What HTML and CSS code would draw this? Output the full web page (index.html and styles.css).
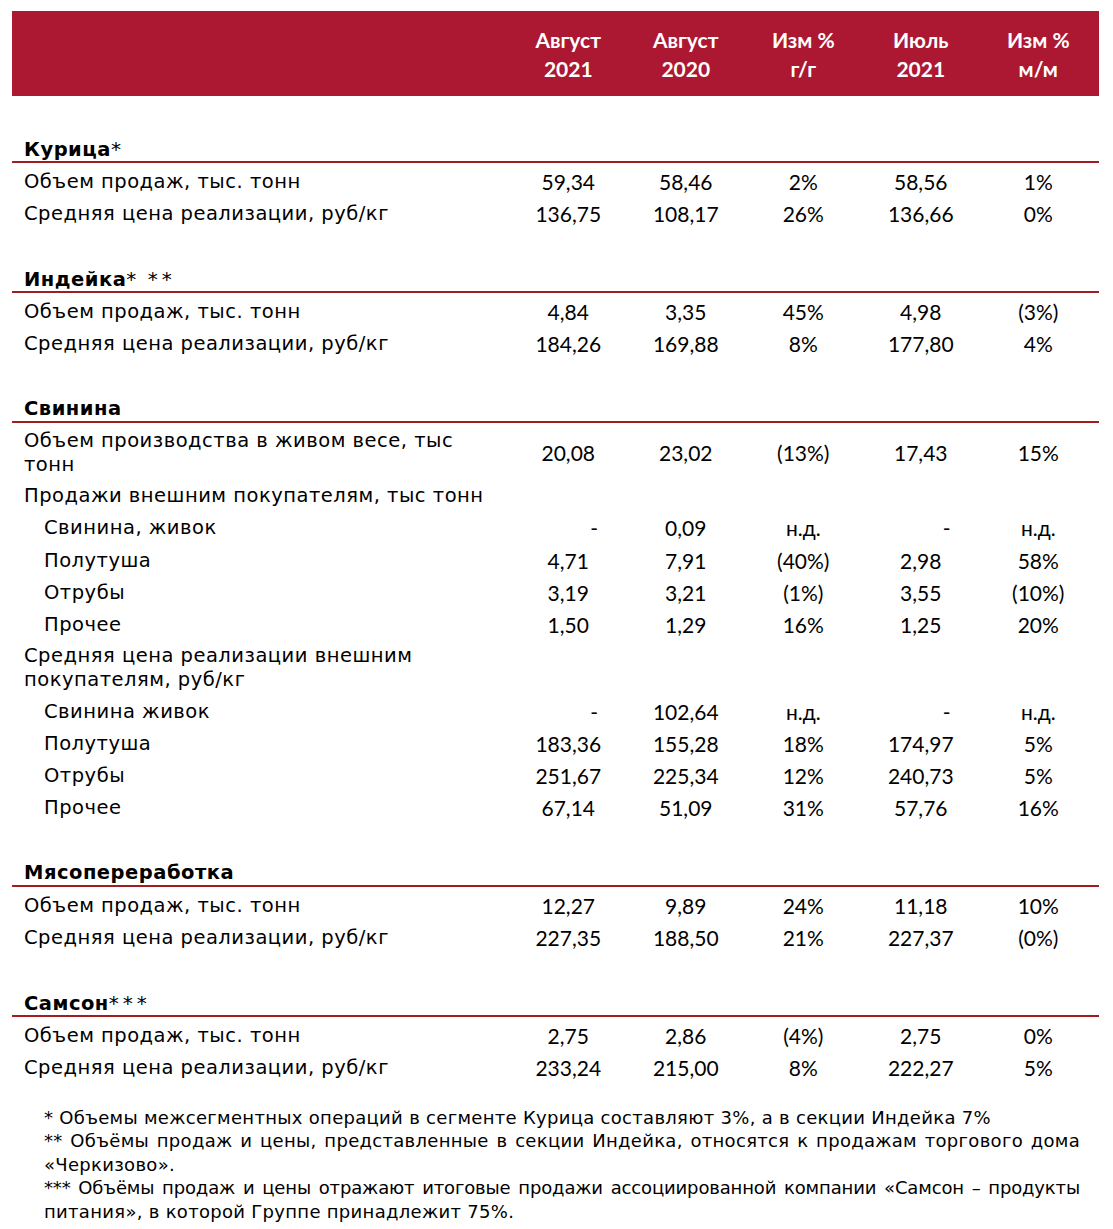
FILE: index.html
```html
<!DOCTYPE html>
<html lang="ru">
<head>
<meta charset="utf-8">
<link rel="stylesheet" href="styles.css">
</head>
<body>
<div class="page">
  <div class="head">
    <div></div>
    <div class="hc">Август<br>2021</div>
    <div class="hc">Август<br>2020</div>
    <div class="hc">Изм %<br>г/г</div>
    <div class="hc">Июль<br>2021</div>
    <div class="hc">Изм %<br>м/м</div>
  </div>

  <div class="sec first">
    <div class="title">Курица<span class="ast">*</span></div>
    <div class="rows">
      <div class="row"><div class="lbl">Объем продаж, тыс. тонн</div><div class="num">59,34</div><div class="num">58,46</div><div class="num">2%</div><div class="num">58,56</div><div class="num">1%</div></div>
      <div class="row"><div class="lbl">Средняя цена реализации, руб/кг</div><div class="num">136,75</div><div class="num">108,17</div><div class="num">26%</div><div class="num">136,66</div><div class="num">0%</div></div>
    </div>
  </div>

  <div class="sec">
    <div class="title">Индейка<span class="ast">*</span> <span class="ast">**</span></div>
    <div class="rows">
      <div class="row"><div class="lbl">Объем продаж, тыс. тонн</div><div class="num">4,84</div><div class="num">3,35</div><div class="num">45%</div><div class="num">4,98</div><div class="num">(3%)</div></div>
      <div class="row"><div class="lbl">Средняя цена реализации, руб/кг</div><div class="num">184,26</div><div class="num">169,88</div><div class="num">8%</div><div class="num">177,80</div><div class="num">4%</div></div>
    </div>
  </div>

  <div class="sec">
    <div class="title">Свинина</div>
    <div class="rows">
      <div class="row"><div class="lbl">Объем производства в живом весе, тыс тонн</div><div class="num">20,08</div><div class="num">23,02</div><div class="num">(13%)</div><div class="num">17,43</div><div class="num">15%</div></div>
      <div class="row"><div class="lbl wide">Продажи внешним покупателям, тыс тонн</div></div>
      <div class="row"><div class="lbl ind">Свинина, живок</div><div class="num dash">-</div><div class="num">0,09</div><div class="num">н.д.</div><div class="num dash">-</div><div class="num">н.д.</div></div>
      <div class="row"><div class="lbl ind">Полутуша</div><div class="num">4,71</div><div class="num">7,91</div><div class="num">(40%)</div><div class="num">2,98</div><div class="num">58%</div></div>
      <div class="row"><div class="lbl ind">Отрубы</div><div class="num">3,19</div><div class="num">3,21</div><div class="num">(1%)</div><div class="num">3,55</div><div class="num">(10%)</div></div>
      <div class="row"><div class="lbl ind">Прочее</div><div class="num">1,50</div><div class="num">1,29</div><div class="num">16%</div><div class="num">1,25</div><div class="num">20%</div></div>
      <div class="row"><div class="lbl">Средняя цена реализации внешним покупателям, руб/кг</div></div>
      <div class="row"><div class="lbl ind">Свинина живок</div><div class="num dash">-</div><div class="num">102,64</div><div class="num">н.д.</div><div class="num dash">-</div><div class="num">н.д.</div></div>
      <div class="row"><div class="lbl ind">Полутуша</div><div class="num">183,36</div><div class="num">155,28</div><div class="num">18%</div><div class="num">174,97</div><div class="num">5%</div></div>
      <div class="row"><div class="lbl ind">Отрубы</div><div class="num">251,67</div><div class="num">225,34</div><div class="num">12%</div><div class="num">240,73</div><div class="num">5%</div></div>
      <div class="row"><div class="lbl ind">Прочее</div><div class="num">67,14</div><div class="num">51,09</div><div class="num">31%</div><div class="num">57,76</div><div class="num">16%</div></div>
    </div>
  </div>

  <div class="sec">
    <div class="title">Мясопереработка</div>
    <div class="rows">
      <div class="row"><div class="lbl">Объем продаж, тыс. тонн</div><div class="num">12,27</div><div class="num">9,89</div><div class="num">24%</div><div class="num">11,18</div><div class="num">10%</div></div>
      <div class="row"><div class="lbl">Средняя цена реализации, руб/кг</div><div class="num">227,35</div><div class="num">188,50</div><div class="num">21%</div><div class="num">227,37</div><div class="num">(0%)</div></div>
    </div>
  </div>

  <div class="sec">
    <div class="title">Самсон<span class="ast">***</span></div>
    <div class="rows">
      <div class="row"><div class="lbl">Объем продаж, тыс. тонн</div><div class="num">2,75</div><div class="num">2,86</div><div class="num">(4%)</div><div class="num">2,75</div><div class="num">0%</div></div>
      <div class="row"><div class="lbl">Средняя цена реализации, руб/кг</div><div class="num">233,24</div><div class="num">215,00</div><div class="num">8%</div><div class="num">222,27</div><div class="num">5%</div></div>
    </div>
  </div>

  <div class="notes">
    <span class="ln">* Объемы межсегментных операций в сегменте Курица составляют 3%, а в секции Индейка 7%</span>
    <span class="ln jl">** Объёмы продаж и цены, представленные в секции Индейка, относятся к продажам торгового дома</span>
    <span class="ln">«Черкизово».</span>
    <span class="ln jl tight">*** Объёмы продаж и цены отражают итоговые продажи ассоциированной компании «Самсон – продукты</span>
    <span class="ln">питания», в которой Группе принадлежит 75%.</span>
  </div>
</div>
</body>
</html>
```

FILE: styles.css
```css
* { box-sizing: border-box; }
body { margin: 0; background: #fff; color: #000; }
.page { width: 1113px; padding: 11px 14px 0 12px; }

.head {
  height: 85px;
  background: #ac1831;
  display: grid;
  grid-template-columns: 1fr repeat(5, 117.5px);
  padding-right: 2px;
  align-items: center;
  color: #fff;
  font-family: Lato, "Open Sans", sans-serif;
  font-weight: 700;
  font-size: 21px;
  line-height: 29px;
  text-align: center;
  margin-bottom: 36px;
}

.sec { margin-top: 32.4px; }
.sec.first { margin-top: 0; }

.title {
  height: 31px;
  padding: 4px 0 0 12px;
  border-bottom: 2px solid #a01d22;
  font-family: "DejaVu Sans", Verdana, sans-serif;
  font-weight: 700;
  font-size: 19.5px;
  line-height: 26px;
  letter-spacing: 0.5px;
}
.ast { font-weight: 400; font-size: 20px; letter-spacing: 4px; }

.rows { margin-top: 2px; }

.row {
  display: grid;
  grid-template-columns: 1fr repeat(5, 117.5px);
  padding: 4px 2px 2px 0;
  min-height: 32.3px;
  align-items: center;
}

.lbl {
  padding-left: 12px;
  font-family: "DejaVu Sans", Verdana, sans-serif;
  font-size: 19.5px;
  line-height: 24px;
  letter-spacing: 0.5px;
  padding-right: 40px;
}
.lbl.wide { grid-column: 1 / 4; }
.lbl.ind { padding-left: 32px; }

.num {
  text-align: center;
  font-family: Lato, "Open Sans", sans-serif;
  font-size: 21px;
  line-height: 24px;
}
.num.dash { padding-left: 52px; }

.notes {
  margin-top: 22px;
  padding-left: 32px;
  width: 1068px;
  font-family: "DejaVu Sans", Verdana, sans-serif;
  font-size: 18px;
  line-height: 23.5px;
  letter-spacing: 0.3px;
}
.ln { display: block; white-space: nowrap; }
.ln.jl { text-align: justify; text-align-last: justify; white-space: normal; }
.ln.tight { letter-spacing: -0.15px; word-spacing: -2px; }
```
